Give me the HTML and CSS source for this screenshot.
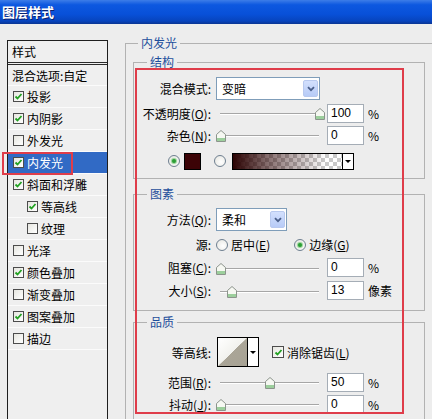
FILE: index.html
```html
<!DOCTYPE html>
<html lang="zh-CN">
<head>
<meta charset="utf-8">
<title>图层样式</title>
<link rel="stylesheet" href="styles.css">
</head>
<body>
<div class="window">
  <div class="titlebar">图层样式</div>
  <div class="main">
    <div class="stylelist">
      <div class="list-header">样式</div>
      <div class="list-item blend">混合选项:自定</div>
      <div class="list-item"><span class="cb"><svg viewBox="0 0 9 9" width="9" height="9"><polyline points="1.5,4.5 3.5,6.5 7.5,2" /></svg></span>投影</div>
      <div class="list-item"><span class="cb"><svg viewBox="0 0 9 9" width="9" height="9"><polyline points="1.5,4.5 3.5,6.5 7.5,2" /></svg></span>内阴影</div>
      <div class="list-item"><span class="cb"></span>外发光</div>
      <div class="list-item selected"><span class="cb"><svg viewBox="0 0 9 9" width="9" height="9"><polyline points="1.5,4.5 3.5,6.5 7.5,2" /></svg></span>内发光<span class="mark"></span></div>
      <div class="list-item"><span class="cb"><svg viewBox="0 0 9 9" width="9" height="9"><polyline points="1.5,4.5 3.5,6.5 7.5,2" /></svg></span>斜面和浮雕</div>
      <div class="list-item sub"><span class="cb"><svg viewBox="0 0 9 9" width="9" height="9"><polyline points="1.5,4.5 3.5,6.5 7.5,2" /></svg></span>等高线</div>
      <div class="list-item sub"><span class="cb"></span>纹理</div>
      <div class="list-item"><span class="cb"></span>光泽</div>
      <div class="list-item"><span class="cb"><svg viewBox="0 0 9 9" width="9" height="9"><polyline points="1.5,4.5 3.5,6.5 7.5,2" /></svg></span>颜色叠加</div>
      <div class="list-item"><span class="cb"></span>渐变叠加</div>
      <div class="list-item"><span class="cb"><svg viewBox="0 0 9 9" width="9" height="9"><polyline points="1.5,4.5 3.5,6.5 7.5,2" /></svg></span>图案叠加</div>
      <div class="list-item"><span class="cb"></span>描边</div>
    </div>

    <fieldset class="panel">
      <legend>内发光</legend>
      <div class="panel-body">

        <fieldset class="group">
          <legend>结构</legend>
          <div class="group-body g1">
            <div class="row tall">
              <span class="lbl">混合模式:</span>
              <div class="select wide"><span>变暗</span><span class="drop"><svg viewBox="0 0 8 6" width="8" height="6"><polyline points="1,1.2 4,4.2 7,1.2" /></svg></span></div>
            </div>
            <div class="row slide first">
              <span class="lbl">不透明度(<u>O</u>):</span>
              <div class="slider"><span class="thumb" style="left:99px"><svg viewBox="0 0 10 12" width="10" height="12"><path d="M0.5 4.5 L5 0.5 L9.5 4.5 V11.5 H0.5 Z" /></svg></span></div>
              <span class="num">100</span><span class="unit">%</span>
            </div>
            <div class="row slide">
              <span class="lbl">杂色(<u>N</u>):</span>
              <div class="slider"><span class="thumb" style="left:0px"><svg viewBox="0 0 10 12" width="10" height="12"><path d="M0.5 4.5 L5 0.5 L9.5 4.5 V11.5 H0.5 Z" /></svg></span></div>
              <span class="num">0</span><span class="unit">%</span>
            </div>
            <div class="row color-row">
              <span class="radio on"></span>
              <span class="swatch"></span>
              <span class="radio r2"></span>
              <div class="gradient"><span class="grad-fill"></span><span class="grad-drop"><span class="tri"></span></span></div>
            </div>
          </div>
        </fieldset>

        <fieldset class="group g-elem">
          <legend>图素</legend>
          <div class="group-body g2">
            <div class="row tall">
              <span class="lbl">方法(<u>Q</u>):</span>
              <div class="select narrow"><span>柔和</span><span class="drop"><svg viewBox="0 0 8 6" width="8" height="6"><polyline points="1,1.2 4,4.2 7,1.2" /></svg></span></div>
            </div>
            <div class="row r23 src">
              <span class="lbl">源:</span>
              <span class="radio"></span><span class="rtext">居中(<u>E</u>)</span>
              <span class="radio on r3"></span><span class="rtext">边缘(<u>G</u>)</span>
            </div>
            <div class="row r23">
              <span class="lbl">阻塞(<u>C</u>):</span>
              <div class="slider"><span class="thumb" style="left:0px"><svg viewBox="0 0 10 12" width="10" height="12"><path d="M0.5 4.5 L5 0.5 L9.5 4.5 V11.5 H0.5 Z" /></svg></span></div>
              <span class="num">0</span><span class="unit">%</span>
            </div>
            <div class="row r23">
              <span class="lbl">大小(<u>S</u>):</span>
              <div class="slider"><span class="thumb" style="left:11px"><svg viewBox="0 0 10 12" width="10" height="12"><path d="M0.5 4.5 L5 0.5 L9.5 4.5 V11.5 H0.5 Z" /></svg></span></div>
              <span class="num">13</span><span class="unit">像素</span>
            </div>
          </div>
        </fieldset>

        <fieldset class="group g-qual">
          <legend>品质</legend>
          <div class="group-body g3">
            <div class="row contour-row">
              <span class="lbl">等高线:</span>
              <div class="contour"><span class="contour-fill"></span><span class="contour-drop"><span class="tri"></span></span></div>
              <span class="cb aa"><svg viewBox="0 0 9 9" width="9" height="9"><polyline points="1.5,4.5 3.5,6.5 7.5,2" /></svg></span>
              <span class="rtext">消除锯齿(<u>L</u>)</span>
            </div>
            <div class="row slide range">
              <span class="lbl">范围(<u>R</u>):</span>
              <div class="slider"><span class="thumb" style="left:49px"><svg viewBox="0 0 10 12" width="10" height="12"><path d="M0.5 4.5 L5 0.5 L9.5 4.5 V11.5 H0.5 Z" /></svg></span></div>
              <span class="num">50</span><span class="unit">%</span>
            </div>
            <div class="row slide">
              <span class="lbl">抖动(<u>J</u>):</span>
              <div class="slider"><span class="thumb" style="left:0px"><svg viewBox="0 0 10 12" width="10" height="12"><path d="M0.5 4.5 L5 0.5 L9.5 4.5 V11.5 H0.5 Z" /></svg></span></div>
              <span class="num">0</span><span class="unit">%</span>
            </div>
          </div>
        </fieldset>

      </div>
    </fieldset>

    <div class="highlight-box"></div>
  </div>
</div>
</body>
</html>
```

FILE: styles.css
```css
html, body {
  margin: 0;
  padding: 0;
}

body {
  background: #ededed;
  font-family: "Noto Sans CJK SC", "Noto Sans", sans-serif;
  font-size: 12px;
  color: #000;
  overflow: hidden;
}

.window {
  width: 432px;
  height: 419px;
  overflow: hidden;
  background: #ededed;
}

/* ---------- title bar ---------- */
.titlebar {
  height: 24px;
  box-sizing: border-box;
  padding-left: 2px;
  line-height: 23px;
  font-size: 13px;
  font-weight: bold;
  color: #fff;
  text-shadow: 1px 1px 0 #0a2270;
  background: linear-gradient(#3d7de8 0%, #0d58e0 20%, #0850d8 60%, #0744bd 88%, #0a3592 100%);
}

.main {
  position: relative;
  display: flex;
  align-items: flex-start;
  padding-top: 12px;
}

/* ---------- left style list ---------- */
.stylelist {
  flex: none;
  margin-left: 7px;
  margin-top: 4px;
  width: 101px;
  height: 400px;
  box-sizing: border-box;
  border: 1px solid #1e1e1e;
  background: #efefef;
}

.list-header {
  height: 21px;
  line-height: 21px;
  padding-left: 4px;
  border-bottom: 3px double #2a2a2a;
}

.list-item {
  position: relative;
  display: flex;
  align-items: center;
  height: 21px;
  padding-left: 5px;
  border-bottom: 1px solid #fbfbfb;
  white-space: nowrap;
}

.list-item.blend {
  height: 20px;
  padding-left: 4px;
}

.list-item.sub {
  padding-left: 19px;
}

.list-item.selected {
  background: #316ac5;
  color: #fff;
}

.mark {
  position: absolute;
  left: -6px;
  top: 0;
  width: 71px;
  height: 23px;
  box-sizing: border-box;
  border: 2px solid #df3d4a;
}

.cb {
  flex: none;
  display: inline-flex;
  align-items: center;
  justify-content: center;
  width: 11px;
  height: 11px;
  box-sizing: border-box;
  margin-right: 3px;
  border: 1px solid #4c4c4c;
  background: linear-gradient(135deg, #e6e6e0, #ffffff);
}

.cb svg polyline {
  fill: none;
  stroke: #21a121;
  stroke-width: 1.8;
}

/* ---------- right panel ---------- */
fieldset {
  margin: 0;
  padding: 0;
  min-width: 0;
  box-sizing: border-box;
  border: 1px solid #b2b2b2;
}

legend {
  padding: 0 3px;
  line-height: 14px;
  height: 14px;
  color: #1e4f9c;
}

.panel {
  flex: none;
  margin-left: 17px;
  width: 320px;
  height: 420px;
}

.panel > legend {
  margin-left: 12px;
}

.panel-body {
  padding: 5px 0 0 7px;
}

.group {
  width: 292px;
}

.group > legend {
  margin-left: 13px;
}

.g-elem {
  margin-top: 8px;
}

.g-qual {
  margin-top: 4px;
  height: 120px;
}

.g1 {
  padding: 8px 0 7px 0;
}

.g2 {
  padding: 7px 0 8px 0;
}

.g3 {
  padding: 8px 0 0 0;
}

.row {
  display: flex;
  align-items: center;
  height: 22px;
  white-space: nowrap;
}

.row.tall {
  height: 23px;
}

.row.slide.first {
  margin-top: 2px;
}

.row.r23 {
  height: 23px;
}

.row.src {
  margin-top: 2px;
}

.lbl {
  flex: none;
  width: 77px;
  margin-right: 5px;
  text-align: right;
}

/* select */
.select {
  flex: none;
  display: flex;
  align-items: center;
  justify-content: space-between;
  height: 23px;
  box-sizing: border-box;
  padding: 2px 1px 2px 5px;
  border: 1px solid #7f9db9;
  background: #fff;
}

.select.wide {
  width: 104px;
}

.select.narrow {
  width: 71px;
}

.drop {
  display: flex;
  align-items: center;
  justify-content: center;
  width: 15px;
  height: 17px;
  box-sizing: border-box;
  border: 1px solid #b8c9ef;
  border-radius: 2px;
  background: linear-gradient(#d3e0fd, #b7cbf7);
}

.drop svg polyline {
  fill: none;
  stroke: #4a5f8a;
  stroke-width: 1.8;
}

/* slider */
.slider {
  flex: none;
  position: relative;
  width: 107px;
  height: 22px;
}

.slider::before {
  content: "";
  position: absolute;
  left: 4px;
  right: 4px;
  top: 11px;
  height: 1px;
  background: #a6a6a6;
  border-bottom: 1px solid #ffffff;
}

.thumb {
  position: absolute;
  top: 6px;
  width: 10px;
  height: 12px;
}

.thumb svg {
  display: block;
}

.thumb path {
  fill: #f6f8f2;
  stroke: #8c948c;
  stroke-width: 1;
}

.thumb::after {
  content: "";
  position: absolute;
  left: 1px;
  right: 1px;
  bottom: 1px;
  height: 3px;
  background: #9ccf9c;
}

.num {
  flex: none;
  margin-left: 4px;
  width: 37px;
  height: 19px;
  box-sizing: border-box;
  padding-left: 3px;
  line-height: 17px;
  border: 1px solid #a5adb6;
  background: #fff;
  font-family: "Liberation Sans", sans-serif;
  font-size: 12px;
}

.unit {
  margin-left: 4px;
}

/* color row */
.row.color-row {
  height: 20px;
  margin-top: 5px;
  padding-left: 34px;
}

.radio {
  flex: none;
  display: inline-flex;
  align-items: center;
  justify-content: center;
  width: 12px;
  height: 12px;
  box-sizing: border-box;
  border-radius: 50%;
  border: 1px solid #6e7f90;
  background: radial-gradient(circle at 60% 60%, #ffffff, #e4e4de);
}

.radio.on::after {
  content: "";
  width: 4px;
  height: 4px;
  border-radius: 50%;
  background: #2b9e35;
  box-shadow: 0 0 1px 1px #8fd08f;
}

.swatch {
  flex: none;
  margin-left: 4px;
  width: 17px;
  height: 17px;
  box-sizing: border-box;
  border: 1px solid #000;
  background: #3c0306;
}

.radio.r2 {
  margin-left: 13px;
}

.gradient {
  flex: none;
  display: flex;
  margin-left: 6px;
  width: 122px;
  height: 17px;
  box-sizing: border-box;
  border: 1px solid #000;
}

.grad-fill {
  flex: 1;
  background:
    linear-gradient(to right, #2c0303 0%, rgba(44, 3, 3, 0.6) 30%, rgba(44, 3, 3, 0) 85%),
    repeating-conic-gradient(#c9c9c9 0 25%, #ffffff 0 50%) 0 0 / 8px 8px;
}

.grad-drop,
.contour-drop {
  flex: none;
  display: flex;
  align-items: center;
  justify-content: center;
  width: 10px;
  border-left: 1px solid #000;
  background: #fff;
}

.tri {
  width: 0;
  height: 0;
  border-left: 3px solid transparent;
  border-right: 3px solid transparent;
  border-top: 3px solid #000;
}

/* source row */
.rtext {
  margin-left: 3px;
}

.radio.r3 {
  margin-left: 24px;
}

/* contour */
.row.contour-row {
  height: 30px;
}

.contour {
  flex: none;
  display: flex;
  margin-left: 1px;
  width: 42px;
  height: 30px;
  box-sizing: border-box;
  border: 1px solid #000;
}

.contour-fill {
  flex: 1;
  background: linear-gradient(to bottom right, #ffffff 0%, #f2f2ee 49.5%, #aaa597 50.5%, #a7a294 100%);
}

.cb.aa {
  width: 12px;
  height: 12px;
  margin-left: 13px;
  margin-right: 0;
}

.row.range {
  margin-top: 4px;
}

/* red highlight around settings */
.highlight-box {
  position: absolute;
  left: 135px;
  top: 44px;
  width: 269px;
  height: 346px;
  box-sizing: border-box;
  border: 2px solid #df3d4a;
  pointer-events: none;
}
```
